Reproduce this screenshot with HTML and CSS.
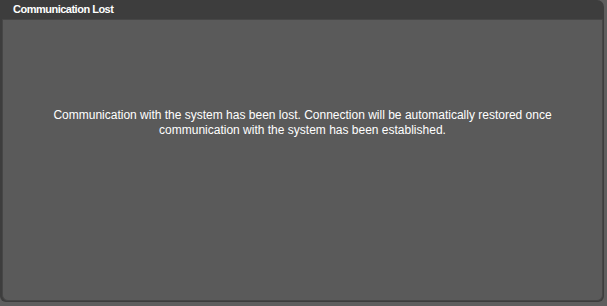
FILE: index.html
```html
<!DOCTYPE html>
<html>
<head>
<meta charset="utf-8">
<link rel="stylesheet" href="styles.css">
</head>
<body>
<div class="dialog">
  <div class="titlebar">Communication Lost</div>
  <div class="pane">
    <p class="message">Communication with the system has been lost. Connection will be automatically restored once communication with the system has been established.</p>
  </div>
</div>
</body>
</html>
```
FILE: styles.css
```css
html, body {
  margin: 0;
  padding: 0;
}
body {
  width: 607px;
  height: 306px;
  background: #5e5e5e;
  font-family: "Liberation Sans", Arial, sans-serif;
  overflow: hidden;
}
.dialog {
  width: 604px;
  height: 302px;
  background: #3d3d3d;
  border-top-right-radius: 7px;
  border-bottom-right-radius: 6px;
  border-bottom-left-radius: 6px;
  display: flex;
  flex-direction: column;
}
.titlebar {
  height: 19px;
  line-height: 19px;
  padding-left: 13px;
  color: #ffffff;
  font-size: 11px;
  font-weight: bold;
  letter-spacing: -0.5px;
  flex: none;
}
.pane {
  flex: 1;
  margin-left: 2px;
  margin-right: 1px;
  margin-bottom: 1px;
  background: #5a5a5a;
  border: 1px solid #464646;
  border-radius: 0 0 6px 6px;
  box-sizing: border-box;
}
.message {
  margin: 88px 40px 0;
  color: #ffffff;
  font-size: 12px;
  line-height: 15px;
  text-align: center;
}
```
